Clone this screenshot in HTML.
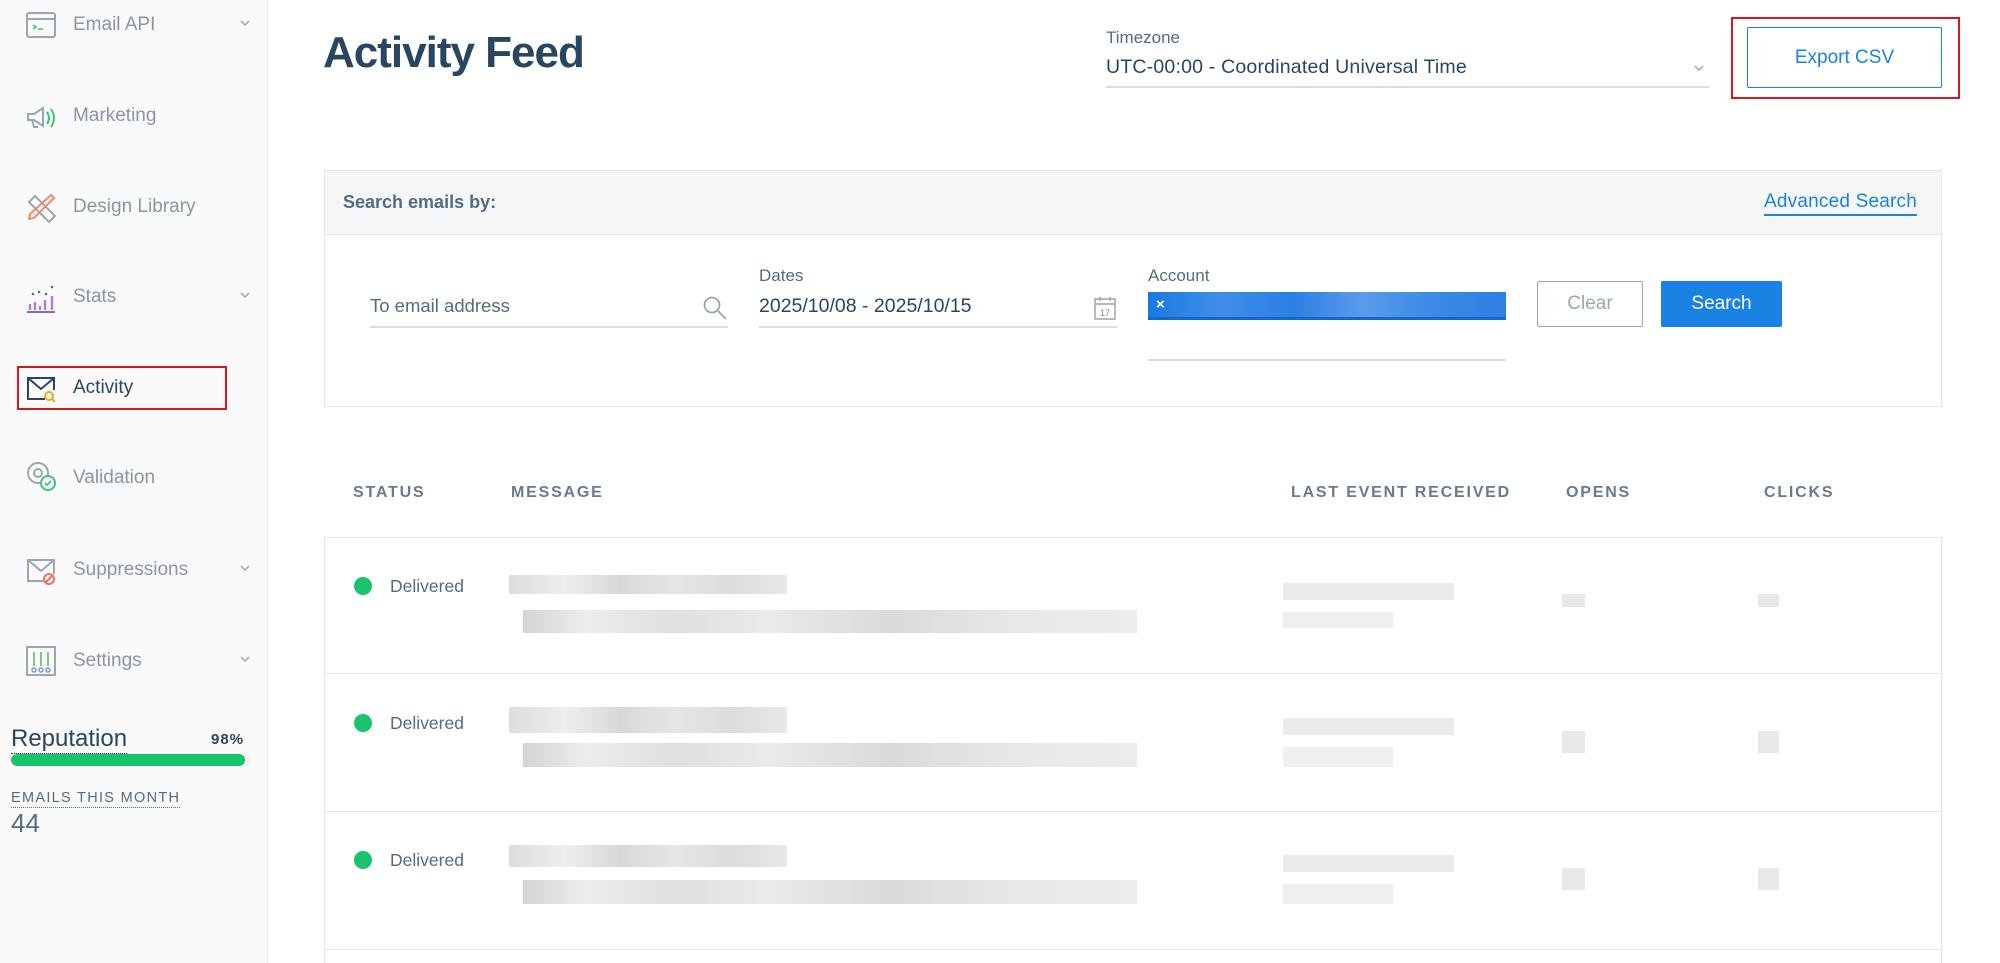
<!DOCTYPE html>
<html style="width:2000px;height:963px;overflow:hidden"><head><meta charset="utf-8"><style>
*{box-sizing:border-box;margin:0;padding:0}
body{width:2000px;height:963px;overflow:hidden;background:#fff;font-family:"Liberation Sans",sans-serif;color:#546b81;position:relative}
.abs{position:absolute}
.side{left:0;top:0;width:268px;height:963px;background:#fafafa;border-right:1px solid #e9ecef}
.nav{position:absolute;left:73px;font-size:19px;color:#8a96a3;line-height:24px}
.ico{position:absolute;left:25px;width:32px;height:32px}
.chev{position:absolute;left:240px;width:10px;height:10px}
.blur{position:absolute;background:#e8e8ea}
.hd{position:absolute;top:484px;font-size:16px;font-weight:bold;letter-spacing:1.8px;color:#6a7a8a}
.del{position:absolute;left:390px;font-size:17.5px;color:#546b81}
.dot{position:absolute;left:354px;width:18px;height:18px;border-radius:50%;background:#18c46b}
.ln{position:absolute;height:1px;background:#d9dee3}
</style></head><body>
<div class="abs side"></div>

<svg class="ico" style="top:9px" viewBox="0 0 32 32"><rect x="2" y="4" width="28" height="24" rx="2" fill="none" stroke="#9aa6b2" stroke-width="2"/><line x1="2" y1="10" x2="30" y2="10" stroke="#9aa6b2" stroke-width="2"/><path d="M8 16l3 2-3 2M13 20h5" stroke="#3cc47c" stroke-width="1.6" fill="none"/></svg>
<div class="nav" style="top:13px">Email API</div>
<svg class="chev" style="top:18px" viewBox="0 0 10 10"><path d="M1 3l4 4 4-4" fill="none" stroke="#9aa6b2" stroke-width="1.5"/></svg>
<svg class="ico" style="top:102px" viewBox="0 0 32 32"><path d="M3 12h6l9-6v18l-9-6H3z" fill="none" stroke="#9aa6b2" stroke-width="2"/><path d="M7 18l2 7h4" fill="none" stroke="#9aa6b2" stroke-width="2"/><path d="M22 10q4 6 0 12M26 7q6 9 0 18" fill="none" stroke="#3cc47c" stroke-width="2"/></svg>
<div class="nav" style="top:104px">Marketing</div>
<svg class="ico" style="top:192px" viewBox="0 0 32 32"><path d="M4 10l6-6 20 20-6 6z" fill="none" stroke="#9aa6b2" stroke-width="2"/><path d="M26 3l3 3L9 26l-5 1 1-5z" fill="none" stroke="#f08a6a" stroke-width="2"/></svg>
<div class="nav" style="top:195px">Design Library</div>
<svg class="ico" style="top:282px" viewBox="0 0 32 32"><path d="M2 30h28" stroke="#7c6bd6" stroke-width="2"/><path d="M5 28v-6M10 28v-8M15 28v-4M20 28v-10M27 28v-14" stroke="#b07ce0" stroke-width="2.4"/><circle cx="8" cy="12" r="1.3" fill="#5a6b7c"/><circle cx="14" cy="10" r="1.3" fill="#5a6b7c"/><circle cx="21" cy="12" r="1.3" fill="#5a6b7c"/><circle cx="27" cy="5" r="1.3" fill="#5a6b7c"/></svg>
<div class="nav" style="top:285px">Stats</div>
<svg class="chev" style="top:290px" viewBox="0 0 10 10"><path d="M1 3l4 4 4-4" fill="none" stroke="#9aa6b2" stroke-width="1.5"/></svg>
<div class="abs" style="left:17px;top:366px;width:210px;height:44px;border:2px solid #d9161d"></div>
<svg class="ico" style="top:373px" viewBox="0 0 32 32"><path d="M20 26H3V5h26v12" fill="none" stroke="#294661" stroke-width="2"/><path d="M3 5l13 11 13-11" fill="none" stroke="#294661" stroke-width="2"/><circle cx="24" cy="23" r="4" fill="none" stroke="#f6a623" stroke-width="2"/><path d="M27 26l3 3" stroke="#f6a623" stroke-width="2"/></svg>
<div class="nav" style="top:376px;color:#294661">Activity</div>
<svg class="ico" style="top:460px" viewBox="0 0 32 32"><circle cx="13" cy="13" r="10" fill="none" stroke="#9aa6b2" stroke-width="2"/><circle cx="13" cy="13" r="4" fill="none" stroke="#9aa6b2" stroke-width="2"/><circle cx="23" cy="23" r="7" fill="#fafafa" stroke="#3cc47c" stroke-width="2"/><path d="M20 23l2 2 4-4" fill="none" stroke="#3cc47c" stroke-width="1.8"/></svg>
<div class="nav" style="top:466px">Validation</div>
<svg class="ico" style="top:555px" viewBox="0 0 32 32"><path d="M20 26H3V5h26v14" fill="none" stroke="#9aa6b2" stroke-width="2"/><path d="M3 5l13 11 13-11" fill="none" stroke="#9aa6b2" stroke-width="2"/><circle cx="24" cy="24" r="5" fill="none" stroke="#f0725a" stroke-width="2"/><path d="M21 27l6-6" stroke="#f0725a" stroke-width="2"/></svg>
<div class="nav" style="top:558px">Suppressions</div>
<svg class="chev" style="top:563px" viewBox="0 0 10 10"><path d="M1 3l4 4 4-4" fill="none" stroke="#9aa6b2" stroke-width="1.5"/></svg>
<svg class="ico" style="top:645px" viewBox="0 0 32 32"><rect x="2" y="2" width="28" height="28" fill="none" stroke="#9aa6b2" stroke-width="2"/><path d="M9 7v14M16 7v14M23 7v14" stroke="#5ab45a" stroke-width="1.5"/><circle cx="9" cy="25" r="2" fill="none" stroke="#7c9ad6" stroke-width="1.5"/><circle cx="16" cy="25" r="2" fill="none" stroke="#7c9ad6" stroke-width="1.5"/><circle cx="23" cy="25" r="2" fill="none" stroke="#7c9ad6" stroke-width="1.5"/></svg>
<div class="nav" style="top:649px">Settings</div>
<svg class="chev" style="top:654px" viewBox="0 0 10 10"><path d="M1 3l4 4 4-4" fill="none" stroke="#9aa6b2" stroke-width="1.5"/></svg>

<div class="abs" style="left:11px;top:724px;font-size:24px;color:#294661;border-bottom:1px dotted #294661;line-height:29px">Reputation</div>
<div class="abs" style="left:211px;top:731px;font-size:15px;font-weight:bold;color:#294661;letter-spacing:1px">98%</div>
<div class="abs" style="left:11px;top:754px;width:240px;height:12px;border-radius:6px;background:#eef0f2"></div>
<div class="abs" style="left:11px;top:754px;width:234px;height:12px;border-radius:6px;background:#18c46b"></div>
<div class="abs" style="left:11px;top:790px;font-size:14.5px;color:#546b81;letter-spacing:1.3px;border-bottom:1px dotted #546b81;line-height:17px">EMAILS THIS MONTH</div>
<div class="abs" style="left:11px;top:808px;font-size:26px;color:#546b81">44</div>

<div class="abs" style="left:323px;top:28px;font-size:44px;font-weight:bold;color:#294661;letter-spacing:-1px">Activity Feed</div>
<div class="abs" style="left:1106px;top:28px;font-size:17px;color:#546b81">Timezone</div>
<div class="abs" style="left:1106px;top:56px;font-size:19.5px;color:#294661;letter-spacing:0.2px">UTC-00:00 - Coordinated Universal Time</div>
<svg class="abs" style="left:1694px;top:63px;width:10px;height:10px" viewBox="0 0 10 10"><path d="M1 3l4 4 4-4" fill="none" stroke="#9aa6b2" stroke-width="1.5"/></svg>
<div class="ln" style="left:1106px;top:86px;width:603px;height:2px"></div>
<div class="abs" style="left:1731px;top:17px;width:229px;height:82px;border:2px solid #d9161d"></div>
<div class="abs" style="left:1747px;top:27px;width:195px;height:61px;border:1px solid #1a82e2;border-radius:2px;color:#1a82e2;font-size:19px;text-align:center;line-height:59px">Export CSV</div>

<div class="abs" style="left:324px;top:170px;width:1618px;height:237px;border:1px solid #e2e6ea"></div>
<div class="abs" style="left:325px;top:171px;width:1616px;height:64px;background:#f5f6f8;border-bottom:1px solid #e2e6ea"></div>
<div class="abs" style="left:343px;top:192px;font-size:18px;font-weight:bold;color:#546b81">Search emails by:</div>
<div class="abs" style="left:1764px;top:190px;font-size:19px;color:#1a82e2;border-bottom:2px solid #1a82e2;line-height:24px;letter-spacing:0.2px">Advanced Search</div>

<div class="abs" style="left:370px;top:295px;font-size:18.5px;color:#546b81">To email address</div>
<svg class="abs" style="left:702px;top:295px;width:26px;height:26px" viewBox="0 0 26 26"><circle cx="10" cy="10" r="7.5" fill="none" stroke="#9aa6b2" stroke-width="1.8"/><path d="M16 16l8 8" stroke="#9aa6b2" stroke-width="1.8"/></svg>
<div class="ln" style="left:370px;top:326px;width:358px;height:2px"></div>
<div class="abs" style="left:759px;top:266px;font-size:17px;color:#546b81">Dates</div>
<div class="abs" style="left:759px;top:295px;font-size:19.5px;color:#294661">2025/10/08 - 2025/10/15</div>
<svg class="abs" style="left:1093px;top:295px;width:24px;height:26px" viewBox="0 0 24 26"><rect x="2" y="4" width="20" height="20" fill="none" stroke="#9aa6b2" stroke-width="1.5"/><path d="M2 9h20M7 2v4M17 2v4" stroke="#9aa6b2" stroke-width="1.5"/><text x="7" y="21" font-size="9" fill="#7a8694" font-family="Liberation Sans">17</text></svg>
<div class="ln" style="left:759px;top:326px;width:358px;height:2px"></div>
<div class="abs" style="left:1148px;top:266px;font-size:17px;color:#546b81">Account</div>
<div class="abs" style="left:1148px;top:292px;width:358px;height:28px;background:linear-gradient(90deg,#1a7ae0,#3f8ee8 20%,#2a80e4 40%,#5a9bec 60%,#3a8ae6 80%,#2d7fe2);border-bottom:3px solid #1568c6"></div>
<div class="abs" style="left:1156px;top:296px;font-size:15px;font-weight:bold;color:#fff">×</div>
<div class="ln" style="left:1148px;top:359px;width:358px;height:2px"></div>
<div class="abs" style="left:1537px;top:281px;width:106px;height:46px;border:1px solid #9aa6b2;border-radius:2px;color:#9aa6b2;font-size:19px;text-align:center;line-height:44px">Clear</div>
<div class="abs" style="left:1661px;top:281px;width:121px;height:46px;background:#1a82e2;border-radius:2px;color:#fff;font-size:19px;text-align:center;line-height:46px">Search</div>

<div class="hd" style="left:353px">STATUS</div>
<div class="hd" style="left:511px">MESSAGE</div>
<div class="hd" style="left:1291px">LAST EVENT RECEIVED</div>
<div class="hd" style="left:1566px">OPENS</div>
<div class="hd" style="left:1764px">CLICKS</div>

<div class="abs" style="left:324px;top:537px;width:1618px;height:426px;border:1px solid #e2e6ea;border-bottom:none"></div>
<div class="ln" style="left:324px;top:673px;width:1618px;background:#e2e6ea"></div>
<div class="ln" style="left:324px;top:811px;width:1618px;background:#e2e6ea"></div>
<div class="ln" style="left:324px;top:949px;width:1618px;background:#e2e6ea"></div>

<div class="dot" style="top:577px"></div><div class="del" style="top:576px">Delivered</div>
<div class="blur" style="left:509px;top:575px;width:278px;height:19px;background:linear-gradient(90deg,#ddd,#eee,#d8d8da,#e6e6e8,#dcdcde,#e8e8e8)"></div>
<div class="blur" style="left:523px;top:610px;width:614px;height:23px;background:linear-gradient(90deg,#d4d4d6,#ececec 10%,#e0e0e2 25%,#eaeaea 40%,#dadadc 60%,#e8e8e8 80%,#ececee)"></div>
<div class="blur" style="left:1283px;top:583px;width:171px;height:17px;background:#ebebed"></div>
<div class="blur" style="left:1283px;top:612px;width:110px;height:16px;background:#efeff0"></div>
<div class="blur" style="left:1562px;top:594px;width:23px;height:13px"></div>
<div class="blur" style="left:1758px;top:594px;width:21px;height:13px"></div>

<div class="dot" style="top:714px"></div><div class="del" style="top:713px">Delivered</div>
<div class="blur" style="left:509px;top:707px;width:278px;height:26px;background:linear-gradient(90deg,#ddd,#eee,#d8d8da,#e6e6e8,#dcdcde,#e8e8e8)"></div>
<div class="blur" style="left:523px;top:743px;width:614px;height:24px;background:linear-gradient(90deg,#d4d4d6,#ececec 10%,#e0e0e2 25%,#eaeaea 40%,#dadadc 60%,#e8e8e8 80%,#ececee)"></div>
<div class="blur" style="left:1283px;top:718px;width:171px;height:17px;background:#ebebed"></div>
<div class="blur" style="left:1283px;top:747px;width:110px;height:20px;background:#efeff0"></div>
<div class="blur" style="left:1562px;top:731px;width:23px;height:22px"></div>
<div class="blur" style="left:1758px;top:731px;width:21px;height:22px"></div>

<div class="dot" style="top:851px"></div><div class="del" style="top:850px">Delivered</div>
<div class="blur" style="left:509px;top:845px;width:278px;height:22px;background:linear-gradient(90deg,#ddd,#eee,#d8d8da,#e6e6e8,#dcdcde,#e8e8e8)"></div>
<div class="blur" style="left:523px;top:880px;width:614px;height:24px;background:linear-gradient(90deg,#d4d4d6,#ececec 10%,#e0e0e2 25%,#eaeaea 40%,#dadadc 60%,#e8e8e8 80%,#ececee)"></div>
<div class="blur" style="left:1283px;top:855px;width:171px;height:17px;background:#ebebed"></div>
<div class="blur" style="left:1283px;top:884px;width:110px;height:20px;background:#efeff0"></div>
<div class="blur" style="left:1562px;top:868px;width:23px;height:22px"></div>
<div class="blur" style="left:1758px;top:868px;width:21px;height:22px"></div>
</body></html>
